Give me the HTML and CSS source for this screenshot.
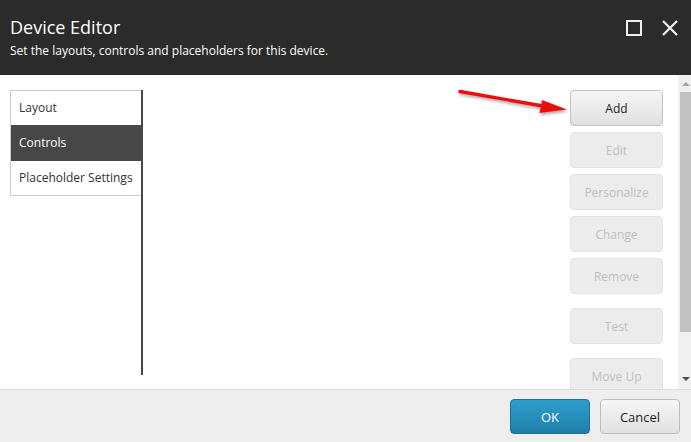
FILE: index.html
```html
<!DOCTYPE html>
<html>
<head>
<meta charset="utf-8">
<link rel="stylesheet" href="styles.css">
</head>
<body>
<div class="dialog">
  <header class="header">
    <div class="titles">
      <h1 class="title">Device Editor</h1>
      <p class="subtitle">Set the layouts, controls and placeholders for this device.</p>
    </div>
    <div class="window-actions">
      <svg class="icon" width="18" height="18" viewBox="0 0 18 18"><rect x="2" y="2" width="14" height="14" fill="none" stroke="#f0f0f0" stroke-width="2"/></svg>
      <svg class="icon" width="18" height="18" viewBox="0 0 18 18"><path d="M2 2 L16 16 M16 2 L2 16" stroke="#f0f0f0" stroke-width="2.2" fill="none"/></svg>
    </div>
  </header>
  <main class="main">
    <div class="content">
      <nav class="tabs">
        <ul class="tab-list">
          <li class="tab">Layout</li>
          <li class="tab active">Controls</li>
          <li class="tab">Placeholder Settings</li>
        </ul>
      </nav>
      <div class="spacer"></div>
      <div class="actions">
        <button class="btn">Add</button>
        <button class="btn disabled">Edit</button>
        <button class="btn disabled">Personalize</button>
        <button class="btn disabled">Change</button>
        <button class="btn disabled">Remove</button>
        <button class="btn disabled sep">Test</button>
        <button class="btn disabled sep">Move Up</button>
      </div>
    </div>
    <div class="scrollbar">
      <div class="arrow up"></div>
      <div class="thumb"></div>
      <div class="arrow down"></div>
    </div>
    <svg class="pointer" width="130" height="40" viewBox="0 0 130 40">
      <defs>
        <filter id="sh" x="-10%" y="-50%" width="130%" height="200%">
          <feDropShadow dx="1" dy="2" stdDeviation="1.5" flood-color="#000" flood-opacity="0.35"/>
        </filter>
      </defs>
      <g filter="url(#sh)">
        <path d="M10 7.5 L90 21.5" stroke="#ee1111" stroke-width="3.4" stroke-linecap="round"/>
        <polygon points="117,25.5 92,16 89.5,29" fill="#ee1111"/>
      </g>
    </svg>
  </main>
  <footer class="footer">
    <button class="fbtn ok">OK</button>
    <button class="fbtn cancel">Cancel</button>
  </footer>
</div>
</body>
</html>
```
FILE: styles.css
```css
* { box-sizing: border-box; }
html, body { margin: 0; padding: 0; }
body {
  font-family: "Open Sans", "Noto Sans", sans-serif;
  width: 691px;
  height: 442px;
  overflow: hidden;
  background: #fff;
}
.dialog {
  display: flex;
  flex-direction: column;
  height: 442px;
}
.header {
  height: 75px;
  background: #2b2b2b;
  color: #fff;
  display: flex;
  justify-content: space-between;
  padding: 0 12px 0 10px;
}
.title {
  margin: 0;
  padding-top: 15px;
  font-size: 18px;
  font-weight: 400;
  line-height: 25px;
}
.subtitle {
  margin: 3px 0 0;
  font-size: 12px;
  line-height: 16px;
}
.window-actions {
  display: flex;
  gap: 18px;
  padding-top: 19px;
}
.icon { display: block; }
.main {
  position: relative;
  flex: 1;
  display: flex;
  overflow: hidden;
  background: #fff;
}
.content {
  flex: 1;
  display: flex;
  padding: 15px 15px 0 10px;
}
.tabs {
  width: 133px;
  height: 285px;
  border-right: 2px solid #474747;
}
.tab-list {
  list-style: none;
  margin: 0;
  padding: 0;
  border: 1px solid #cccccc;
  border-right: none;
}
.tab {
  height: 34px;
  line-height: 33px;
  padding-left: 8px;
  font-size: 12px;
  color: #333;
}
.tab.active {
  background: #474747;
  color: #fff;
  height: 36px;
  line-height: 35px;
}
.spacer { flex: 1; }
.actions {
  width: 93px;
  display: flex;
  flex-direction: column;
  gap: 6px;
}
.btn {
  height: 36px;
  flex: none;
  border-radius: 4px;
  border: 1px solid #c3c3c3;
  background: linear-gradient(#f6f6f6, #e0e0e0);
  font-family: "Open Sans", "Noto Sans", sans-serif;
  font-size: 12px;
  color: #1e1e1e;
  padding: 0;
}
.btn.disabled {
  background: #ececec;
  border-color: #e3e3e3;
  color: #bfbfbf;
}
.btn.sep { margin-top: 8px; }
.scrollbar {
  width: 13px;
  background: #f0f0f0;
  position: relative;
}
.thumb {
  position: absolute;
  top: 17px;
  left: 2px;
  width: 11px;
  height: 240px;
  background: #c1c1c1;
}
.arrow {
  position: absolute;
  left: 4px;
  width: 0;
  height: 0;
  border-left: 4px solid transparent;
  border-right: 4px solid transparent;
}
.arrow.up { top: 7px; border-bottom: 4px solid #a3a3a3; }
.arrow.down { bottom: 8px; border-top: 4px solid #505050; }
.pointer {
  position: absolute;
  left: 450px;
  top: 9px;
}
.footer {
  height: 53px;
  border-top: 1px solid #dddddd;
  background: #eeeeee;
  display: flex;
  justify-content: flex-end;
  gap: 10px;
  padding: 9px 11px 0 0;
}
.fbtn {
  width: 80px;
  height: 35px;
  border-radius: 4px;
  font-family: "Open Sans", "Noto Sans", sans-serif;
  font-size: 13px;
  padding: 0;
}
.ok {
  background: linear-gradient(#2d9fcd, #1f7fa9);
  border: 1px solid #1c7399;
  color: #fff;
}
.cancel {
  background: linear-gradient(#f6f6f6, #e0e0e0);
  border: 1px solid #bdbdbd;
  color: #1e1e1e;
}
```
